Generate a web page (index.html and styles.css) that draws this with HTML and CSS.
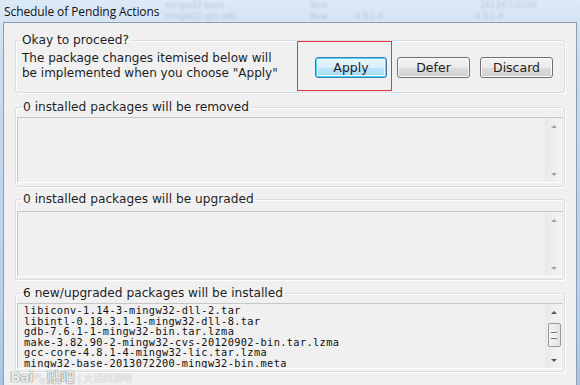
FILE: index.html
```html
<!DOCTYPE html>
<html lang="en">
<head>
  <meta charset="UTF-8">
  <title>Schedule of Pending Actions</title>
  <link rel="stylesheet" href="styles.css">
</head>
<body>

  <div class="window">
    <div class="titlebar">
      <span class="title">Schedule of Pending Actions</span>
      <div class="behind">
        <div class="behind-row"><span class="w1">mingw32-base</span><span class="w2">New</span><span class="w3">2013/07/2200</span></div>
        <div class="behind-row"><span class="w1">mingw32-gcc-ada</span><span class="w2">New</span><span class="w4">4.8.1-4</span><span class="w5">4.8.1-4</span></div>
      </div>
    </div>

    <div class="client">
      <fieldset class="group intro">
        <legend>Okay to proceed?</legend>
        <div class="intro-row">
          <p class="message">The package changes itemised below will<br>be implemented when you choose "Apply"</p>
          <div class="actions">
            <button class="btn default">Apply</button>
            <button class="btn">Defer</button>
            <button class="btn">Discard</button>
            <span class="highlight"></span>
          </div>
        </div>
      </fieldset>

      <fieldset class="group removed">
        <legend>0 installed packages will be removed</legend>
        <div class="listbox">
          <div class="items"></div>
          <div class="scrollbar">
            <span class="arrow up"></span>
            <span class="track"></span>
            <span class="arrow down"></span>
          </div>
        </div>
      </fieldset>

      <fieldset class="group upgraded">
        <legend>0 installed packages will be upgraded</legend>
        <div class="listbox">
          <div class="items"></div>
          <div class="scrollbar">
            <span class="arrow up"></span>
            <span class="track"></span>
            <span class="arrow down"></span>
          </div>
        </div>
      </fieldset>

      <fieldset class="group installed">
        <legend>6 new/upgraded packages will be installed</legend>
        <div class="listbox">
          <div class="items">
            <div>libiconv-1.14-3-mingw32-dll-2.tar</div>
            <div>libintl-0.18.3.1-1-mingw32-dll-8.tar</div>
            <div>gdb-7.6.1-1-mingw32-bin.tar.lzma</div>
            <div>make-3.82.90-2-mingw32-cvs-20120902-bin.tar.lzma</div>
            <div>gcc-core-4.8.1-4-mingw32-lic.tar.lzma</div>
            <div>mingw32-base-2013072200-mingw32-bin.meta</div>
          </div>
          <div class="scrollbar active">
            <span class="arrow up"></span>
            <span class="track"><span class="thumb"></span></span>
            <span class="arrow down"></span>
          </div>
        </div>
      </fieldset>

      <span class="watermark">Bai<b>&#x1F43E;</b>贴吧<i>| 大话西游吧</i></span>
    </div>
  </div>

</body>
</html>
```

FILE: styles.css
```css
html, body {
  margin: 0;
  padding: 0;
}
body {
  width: 580px;
  height: 385px;
  overflow: hidden;
  background: #a9c7e8;
  font-family: 'DejaVu Sans', Tahoma, sans-serif;
  color: #1a1a1a;
}
.window {
  width: 580px;
  height: 385px;
  background: linear-gradient(to bottom, #dce9f6 0, #c9dcef 60px, #b8d0ea 300px, #a9c6e6 100%);
}

/* title bar */
.titlebar {
  position: relative;
  height: 22px;
  display: flex;
  align-items: center;
  padding-left: 4px;
}
.title {
  font-family: 'Open Sans', 'Noto Sans', sans-serif;
  font-size: 12px;
  color: #111;
  position: relative;
  z-index: 1;
  letter-spacing: -0.1px;
}
.behind {
  position: absolute;
  left: 165px;
  top: 0;
  right: 0;
  font-size: 8px;
  color: rgba(70, 85, 110, 0.22);
  filter: blur(1.2px);
}
.behind-row {
  display: flex;
  height: 11px;
  align-items: center;
}
.w1 { width: 145px; }
.w2 { width: 45px; }
.w3 { margin-left: 125px; }
.w4 { width: 120px; }

/* dialog client */
.client {
  position: relative;
  margin: 0 3px;
  height: 356px;
  background: #f0f0f0;
  border: 1px solid #8d9cae;
  padding: 10px 11px 0;
}

.group {
  margin: 0;
  border: 1px solid #d5dfe5;
  border-radius: 3px;
  box-shadow: inset 1px 1px #fff, 1px 1px #fff;
  padding: 3px 1px 3px;
  min-width: 0;
}
.group legend {
  font-size: 12.2px;
  line-height: 14px;
  padding: 0 2px;
  margin-left: 4px;
  color: #1e1e1e;
}
.removed { margin-top: 7px; }
.upgraded { margin-top: 5px; padding-top: 5px; padding-bottom: 2px; }
.installed { margin-top: 6px; padding-bottom: 2px; }

/* intro */
.intro {
  padding: 4px 11px 11px 6px;
}
.intro legend {
  margin-left: -1px;
  padding: 0 1px;
}
.intro-row {
  display: flex;
  justify-content: space-between;
  align-items: center;
  height: 30px;
}
.message {
  margin: 0;
  font-size: 12px;
  line-height: 15px;
  color: #1e1e1e;
}
.actions {
  position: relative;
  display: flex;
  gap: 10px;
  margin-top: 2px;
}
.btn {
  width: 73px;
  height: 21px;
  padding: 0;
  font-family: 'DejaVu Sans', Tahoma, sans-serif;
  font-size: 12.5px;
  color: #1e1e1e;
  border: 1px solid #707070;
  border-radius: 3px;
  background: linear-gradient(to bottom, #f2f2f2 0, #ebebeb 50%, #dddddd 51%, #cfcfcf 100%);
  box-shadow: inset 0 0 0 1px #fbfbfb;
}
.btn.default {
  width: 72px;
  border-color: #3c7fb1;
  background: linear-gradient(to bottom, #eaf6fd 0, #d9f0fc 50%, #bee6fd 51%, #a7d9f5 100%);
  box-shadow: inset 0 0 0 1px #48d6f8, inset 0 0 0 2px #eef8fd;
}
.highlight {
  position: absolute;
  left: -18px;
  top: -16px;
  width: 93px;
  height: 48px;
  border: 1px solid #e8343a;
}

/* list boxes */
.listbox {
  display: flex;
  height: 64px;
  border: 1px solid #c6c6c6;
  border-bottom-color: #fdfdfd;
  border-right-color: #e8e8e8;
  background: #f0f0f0;
}
.items {
  flex: 1;
  padding: 1px 0 0 6px;
  font-family: 'DejaVu Sans Mono', 'Liberation Mono', monospace;
  font-size: 10.3px;
  letter-spacing: 0.37px;
  line-height: 10.6px;
  color: #111;
  overflow: hidden;
  white-space: nowrap;
}
.scrollbar {
  width: 16px;
  display: flex;
  flex-direction: column;
  align-items: center;
  border-left: 1px solid #e6e6e6;
  background: linear-gradient(to right, #eaeaea, #f4f4f4);
}
.arrow {
  height: 16px;
  width: 16px;
  display: flex;
  align-items: center;
  justify-content: center;
}
.arrow::before {
  content: "";
  border-left: 3px solid transparent;
  border-right: 3px solid transparent;
}
.arrow.up::before { border-bottom: 3px solid #a3a3a3; }
.arrow.down::before { border-top: 3px solid #a3a3a3; }
.active .arrow.up::before { border-bottom-color: #555; }
.active .arrow.down::before { border-top-color: #555; }
.track {
  flex: 1;
  width: 16px;
  display: flex;
  justify-content: center;
  align-items: center;
}
.thumb {
  width: 13px;
  height: 24px;
  margin-top: -2px;
  border: 1px solid #979797;
  border-radius: 2px;
  background: linear-gradient(to right, #f4f4f4, #e2e2e2);
  box-sizing: border-box;
  display: flex;
  align-items: center;
  justify-content: center;
}
.thumb::before {
  content: "";
  width: 6px;
  height: 5px;
  border-top: 1px solid #6c6c6c;
  border-bottom: 1px solid #6c6c6c;
  box-shadow: inset 0 2px 0 -1px #fff, inset 0 -2px 0 -1px #fff, inset 0 3px 0 -2px #6c6c6c;
}

/* watermark */
.watermark {
  position: absolute;
  left: 6px;
  bottom: 3px;
  font-family: 'DejaVu Sans', 'Noto Sans CJK SC', sans-serif;
  font-size: 14px;
  line-height: 14px;
  font-weight: bold;
  color: rgba(255, 255, 255, 0.9);
  text-shadow: 0 0 1px rgba(80, 80, 80, 0.9), 0 0 1px rgba(80, 80, 80, 0.6);
  letter-spacing: -0.5px;
}
.watermark b {
  font-size: 11px;
  filter: grayscale(1) brightness(2.5);
}
.watermark i {
  font-style: normal;
  font-weight: normal;
  font-size: 10px;
  margin-left: 4px;
  color: rgba(255, 255, 255, 0.45);
  text-shadow: 0 0 1px rgba(120, 120, 120, 0.4);
}
```
